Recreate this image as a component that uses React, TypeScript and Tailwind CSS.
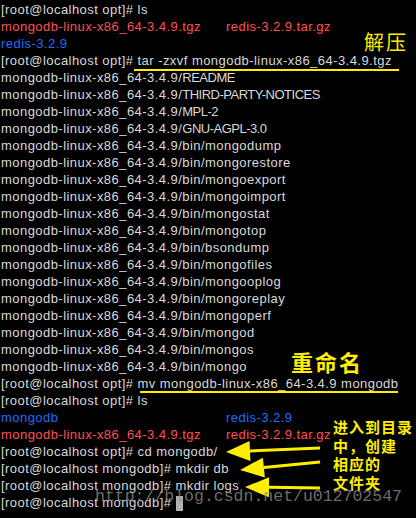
const mono = "font-['Liberation_Sans',Arial,sans-serif] text-[13px] tracking-[0.45px]";

type Seg = { text: string; color?: string };

const prompt = (dir: string, cmd: string) => `[root@localhost ${dir}]# ${cmd}`;

const extracted: { name: string; caps?: boolean }[] = [
  { name: "README", caps: true },
  { name: "THIRD-PARTY-NOTICES", caps: true },
  { name: "MPL-2", caps: true },
  { name: "GNU-AGPL-3.0", caps: true },
  { name: "bin/mongodump" },
  { name: "bin/mongorestore" },
  { name: "bin/mongoexport" },
  { name: "bin/mongoimport" },
  { name: "bin/mongostat" },
  { name: "bin/mongotop" },
  { name: "bin/bsondump" },
  { name: "bin/mongofiles" },
  { name: "bin/mongooplog" },
  { name: "bin/mongoreplay" },
  { name: "bin/mongoperf" },
  { name: "bin/mongod" },
  { name: "bin/mongos" },
  { name: "bin/mongo" },
];

function Line({ children }: { children: React.ReactNode }) {
  return <div className="h-[17px] leading-[17px] whitespace-pre">{children}</div>;
}

function Cols({ left, right }: { left: Seg; right: Seg }) {
  return (
    <div className="h-[17px] leading-[17px] whitespace-pre flex">
      <span className={`w-[225px] ${left.color ?? ""}`}>{left.text}</span>
      <span className={right.color ?? ""}>{right.text}</span>
    </div>
  );
}

function Arrow({ x1, y1, x2, y2 }: { x1: number; y1: number; x2: number; y2: number }) {
  const ang = Math.atan2(y2 - y1, x2 - x1);
  const len = 24;
  const w = 10;
  const bx = x2 - Math.cos(ang) * len;
  const by = y2 - Math.sin(ang) * len;
  const px = -Math.sin(ang) * w;
  const py = Math.cos(ang) * w;
  return (
    <g>
      <line x1={x1} y1={y1} x2={bx} y2={by} stroke="#ffee00" strokeWidth="3" />
      <polygon points={`${x2},${y2} ${bx + px},${by + py} ${bx - px},${by - py}`} fill="#ffee00" />
    </g>
  );
}

export default function App() {
  const red = "text-[#ff4f4f]";
  const blue = "text-[#1f6bff]";
  return (
    <div className={`relative w-[416px] h-[518px] overflow-hidden bg-black text-[#d9d9d9] ${mono}`}>
      <div className="pl-[1px] pt-[1px]">
        <Line>{prompt("opt", "ls")}</Line>
        <Cols
          left={{ text: "mongodb-linux-x86_64-3.4.9.tgz", color: red }}
          right={{ text: "redis-3.2.9.tar.gz", color: red }}
        />
        <Line>
          <span className={blue}>redis-3.2.9</span>
        </Line>
        <Line>{prompt("opt", "tar -zxvf mongodb-linux-x86_64-3.4.9.tgz")}</Line>
        {extracted.map((f) => (
          <Line key={f.name}>
            mongodb-linux-x86_64-3.4.9/
            {f.caps ? <span className="tracking-[-0.5px]">{f.name}</span> : f.name}
          </Line>
        ))}
        <Line>{prompt("opt", "mv mongodb-linux-x86_64-3.4.9 mongodb")}</Line>
        <Line>{prompt("opt", "ls")}</Line>
        <Cols left={{ text: "mongodb", color: blue }} right={{ text: "redis-3.2.9", color: blue }} />
        <Cols
          left={{ text: "mongodb-linux-x86_64-3.4.9.tgz", color: red }}
          right={{ text: "redis-3.2.9.tar.gz", color: red }}
        />
        <Line>{prompt("opt", "cd mongodb/")}</Line>
        <Line>{prompt("mongodb", "mkdir db")}</Line>
        <Line>{prompt("mongodb", "mkdir logs")}</Line>
        <Line>
          {prompt("mongodb", "")}
          <span className="inline-block w-[7px] h-[15px] align-middle bg-[#b0b0b0]" />
        </Line>
      </div>

      {/* yellow notes drawn on top of the screenshot */}
      <div className="absolute left-[134px] top-[69px] w-[265px] h-[2px] bg-[#ffee00]" />
      <div className="absolute left-[140px] top-[391px] w-[258px] h-[2px] bg-[#ffee00]" />

      <div className="absolute left-[364px] top-[31px] text-[20px] leading-[22px] text-[#ffee00] font-['Noto_Sans_CJK_SC',sans-serif] tracking-[2px]">
        解压
      </div>
      <div className="absolute left-[291px] top-[349px] text-[22px] leading-[24px] text-[#ffee00] font-bold font-['Noto_Sans_CJK_SC',sans-serif] tracking-[2px]">
        重命名
      </div>
      <div className="absolute left-[333px] top-[418px] flex flex-col text-[15px] leading-[18.5px] text-[#ffee00] font-bold font-['Noto_Sans_CJK_SC',sans-serif] tracking-[1px]">
        <span>进入到目录</span>
        <span>中，创建</span>
        <span>相应的</span>
        <span>文件夹</span>
      </div>

      <svg className="absolute left-0 top-0" width="416" height="518">
        <Arrow x1={320} y1={448} x2={226} y2={452} />
        <Arrow x1={320} y1={462} x2={240} y2={470} />
        <Arrow x1={320} y1={488} x2={245} y2={487} />
      </svg>

      <div className="absolute left-[95px] top-[487px] text-[16.5px] leading-[20px] tracking-normal text-[#8a8a8a]/80 font-['Liberation_Mono',monospace] whitespace-pre">
        http://blog.csdn.net/u012702547
      </div>
    </div>
  );
}
